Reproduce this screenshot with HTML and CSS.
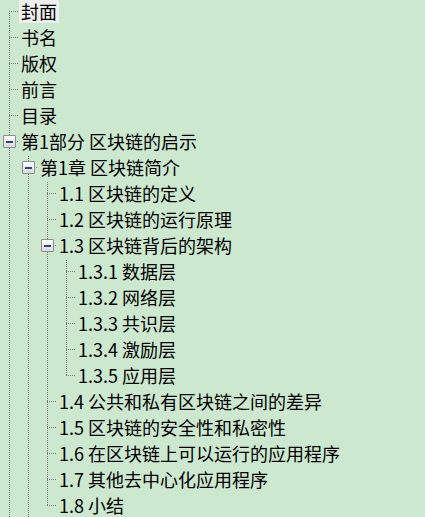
FILE: index.html
```html
<!DOCTYPE html>
<html lang="zh-CN">
<head>
<meta charset="utf-8">
<title>目录</title>
<link rel="stylesheet" href="styles.css">
</head>
<body>
<ul class="tree root">
  <li class="item first"><div class="row"><span class="label selected">封面</span></div></li>
  <li class="item"><div class="row"><span class="label">书名</span></div></li>
  <li class="item"><div class="row"><span class="label">版权</span></div></li>
  <li class="item"><div class="row"><span class="label">前言</span></div></li>
  <li class="item"><div class="row"><span class="label">目录</span></div></li>
  <li class="item">
    <div class="row parent"><span class="toggle"></span><span class="label">第1部分 区块链的启示</span></div>
    <ul class="tree">
      <li class="item">
        <div class="row parent"><span class="toggle"></span><span class="label">第1章 区块链简介</span></div>
        <ul class="tree">
          <li class="item"><div class="row"><span class="label">1.1 区块链的定义</span></div></li>
          <li class="item"><div class="row"><span class="label">1.2 区块链的运行原理</span></div></li>
          <li class="item">
            <div class="row parent"><span class="toggle"></span><span class="label">1.3 区块链背后的架构</span></div>
            <ul class="tree">
              <li class="item"><div class="row"><span class="label">1.3.1 数据层</span></div></li>
              <li class="item"><div class="row"><span class="label">1.3.2 网络层</span></div></li>
              <li class="item"><div class="row"><span class="label">1.3.3 共识层</span></div></li>
              <li class="item"><div class="row"><span class="label">1.3.4 激励层</span></div></li>
              <li class="item last"><div class="row"><span class="label">1.3.5 应用层</span></div></li>
            </ul>
          </li>
          <li class="item"><div class="row"><span class="label">1.4 公共和私有区块链之间的差异</span></div></li>
          <li class="item"><div class="row"><span class="label">1.5 区块链的安全性和私密性</span></div></li>
          <li class="item"><div class="row"><span class="label">1.6 在区块链上可以运行的应用程序</span></div></li>
          <li class="item"><div class="row"><span class="label">1.7 其他去中心化应用程序</span></div></li>
          <li class="item last"><div class="row"><span class="label">1.8 小结</span></div></li>
        </ul>
      </li>
    </ul>
  </li>
</ul>
</body>
</html>
```

FILE: styles.css
```css
html, body {
  margin: 0;
  padding: 0;
  background: #cce8cf;
  overflow: hidden;
}

body {
  font-family: "Noto Sans CJK SC", "Microsoft YaHei", sans-serif;
  font-size: 18px;
  color: #000;
  height: 517px;
}

.tree {
  list-style: none;
  margin: 0;
  padding: 0;
}

.tree .tree {
  padding-left: 19px;
}

/* dotted tree lines: vertical line + horizontal connector */
.item {
  background-image:
    repeating-linear-gradient(to bottom, #7a7a7a 0 1px, transparent 1px 2px),
    repeating-linear-gradient(to right, #7a7a7a 0 1px, transparent 1px 2px);
  background-repeat: no-repeat;
  background-position: 9px 0, 9px 11px;
  background-size: 1px calc(100% + 4px), 10px 1px;
}

.item.first {
  background-position: 9px 11px, 9px 11px;
}

.item.last {
  background-size: 1px 12px, 10px 1px;
}

.row {
  height: 26px;
  display: flex;
  align-items: flex-start;
  padding-left: 19px;
  white-space: nowrap;
}

.row.parent {
  padding-left: 3px;
}

.toggle {
  box-sizing: border-box;
  width: 13px;
  height: 13px;
  margin-top: 5px;
  margin-right: 3px;
  border: 1px solid #8f8f8f;
  border-radius: 1px;
  background: linear-gradient(#ffffff, #d9d9d9);
  display: flex;
  align-items: center;
  justify-content: center;
}

.toggle::before {
  content: "";
  width: 7px;
  height: 2px;
  background: #2d4488;
}

.label {
  height: 23px;
  line-height: 23px;
  padding: 0 2px;
}

.label.selected {
  background: #efefef;
}
```
